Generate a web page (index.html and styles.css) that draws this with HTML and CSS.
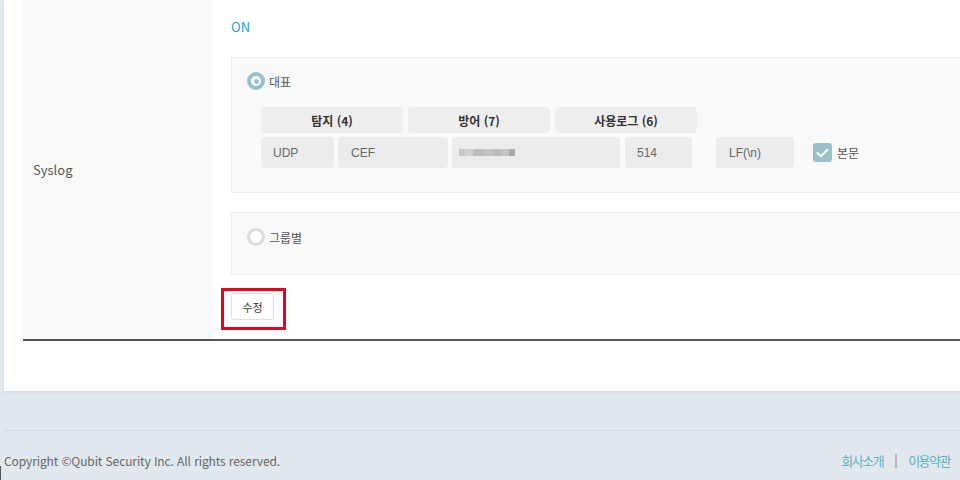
FILE: index.html
```html
<!DOCTYPE html>
<html lang="ko">
<head>
<meta charset="utf-8">
<link rel="stylesheet" href="styles.css">
</head>
<body>
<div class="panel">
  <div class="row">
    <div class="label">Syslog</div>
    <div class="content">
      <div class="on">ON</div>
      <div class="box box-main">
        <div class="radio-line"><span class="radio checked"></span><span class="radio-text">대표</span></div>
        <div class="grid">
          <div class="hdr-row">
            <div class="hdr">탐지 (4)</div>
            <div class="hdr">방어 (7)</div>
            <div class="hdr">사용로그 (6)</div>
          </div>
          <div class="val-row">
            <div class="cell w-udp">UDP</div>
            <div class="cell w-cef">CEF</div>
            <div class="cell w-ip"><span class="blur"><i class="b1"></i><i class="b2"></i><i class="b3"></i><i class="b4"></i><i class="b5"></i><i class="b6"></i><i class="b7"></i></span></div>
            <div class="cell w-port">514</div>
            <div class="cell w-lf">LF(\n)</div>
            <label class="check"><span class="checkbox"><svg width="13" height="10" viewBox="0 0 13 10"><path d="M1.5 5 L5 8.2 L11.5 1.8" fill="none" stroke="#fff" stroke-width="2" stroke-linecap="round" stroke-linejoin="round"/></svg></span><span class="check-text">본문</span></label>
          </div>
        </div>
      </div>
      <div class="box box-group">
        <div class="radio-line"><span class="radio"></span><span class="radio-text">그룹별</span></div>
      </div>
      <div class="mark"><button class="btn">수정</button></div>
    </div>
  </div>
</div>
<div class="footer">
  <div class="copy">Copyright ©Qubit Security Inc. All rights reserved.</div>
  <div class="links"><a>회사소개</a><span class="sep"></span><a>이용약관</a></div>
</div>
<div class="cursor"></div>
</body>
</html>
```
FILE: styles.css
```css
* { box-sizing: border-box; }
html, body { margin: 0; padding: 0; }
body {
  background: #e2e9ee;
  width: 960px;
  height: 480px;
  overflow: hidden;
  position: relative;
  font-family: "Noto Sans CJK KR", "Noto Sans", sans-serif;
  color: #555;
}
.panel {
  margin-left: 4px;
  background: #fff;
  height: 391px;
  padding-left: 19px;
  box-shadow: 0 1px 3px rgba(0,0,0,0.08);
}
.row {
  display: flex;
  height: 341px;
  border-bottom: 2px solid #555;
}
.label {
  width: 189px;
  background: #f9f9f9;
  display: flex;
  align-items: center;
  padding-left: 10px;
  font-size: 13px;
  color: #555;
}
.content {
  flex: 1;
  padding: 17px 0 0 19px;
}
.on {
  font-size: 13px;
  line-height: 20px;
  color: #1c9fd8;
  margin-bottom: 20px;
}
.box {
  background: #f9f9f9;
  border: 1px solid #ececec;
  border-right: none;
  padding-left: 15px;
}
.box-main { height: 136px; padding-top: 14px; }
.box-group { height: 63px; padding-top: 15px; margin-top: 19px; }
.radio-line {
  display: flex;
  align-items: center;
  height: 18px;
}
.radio {
  width: 18px;
  height: 18px;
  border-radius: 50%;
  border: 3px solid #d5dbde;
  background: #fff;
  position: relative;
  flex: none;
}
.radio.checked {
  border: 4px solid #97c1cc;
}
.radio.checked::after {
  content: "";
  position: absolute;
  left: 2.5px;
  top: 2.5px;
  width: 5px;
  height: 5px;
  border-radius: 50%;
  background: #97c1cc;
}
.radio-text {
  margin-left: 4px;
  font-size: 12px;
  color: #555;
}
.grid {
  margin: 17px 0 0 14px;
}
.hdr-row {
  display: flex;
  gap: 5px;
}
.hdr {
  width: 142px;
  height: 26px;
  background: #eeeeee;
  border-radius: 4px;
  display: flex;
  align-items: center;
  justify-content: center;
  font-size: 12px;
  font-weight: bold;
  color: #333;
}
.val-row {
  display: flex;
  align-items: center;
  margin-top: 4px;
  height: 31px;
}
.cell {
  height: 31px;
  background: #ececed;
  border-radius: 4px;
  display: flex;
  align-items: center;
  padding-left: 12px;
  font-family: "Liberation Sans", Arial, sans-serif;
  font-size: 12px;
  color: #666;
  flex: none;
}
.w-udp { width: 73px; }
.w-cef { width: 110px; margin-left: 4px; padding-left: 13px; }
.w-ip { width: 168px; margin-left: 4px; padding-left: 7px; }
.w-port { width: 67px; margin-left: 5px; }
.w-lf { width: 78px; margin-left: 24px; padding-left: 13px; }
.blur { display: flex; height: 7px; }
.blur i { display: block; width: 8px; height: 7px; }
.blur .b1 { background: #c8c6c4; width: 6px; }
.blur .b2 { background: #d2d0cf; }
.blur .b3 { background: #bdbdbd; width: 12px; }
.blur .b4 { background: #c7c3bf; }
.blur .b5 { background: #b7bcc1; }
.blur .b6 { background: #c6c6c6; }
.blur .b7 { background: #aaaaaa; width: 6px; }
.check {
  display: flex;
  align-items: center;
  margin-left: 19px;
}
.checkbox {
  width: 19px;
  height: 19px;
  border-radius: 3px;
  background: #97c2cc;
  display: flex;
  align-items: center;
  justify-content: center;
}
.check-text {
  margin-left: 5px;
  font-size: 12px;
  color: #555;
}
.mark {
  display: inline-flex;
  border: 3px solid #e8001c;
  padding: 2px 9px 7px 7px;
  margin: 13px 0 0 -10px;
}
.btn {
  width: 43px;
  height: 27px;
  background: #fff;
  border: 1px solid #dedede;
  border-radius: 3px;
  font-family: "Noto Sans CJK KR", sans-serif;
  font-size: 11px;
  color: #333;
  padding: 0;
}
.footer {
  margin: 39px 0 0 4px;
  border-top: 1px solid #d3dadf;
  height: 50px;
  display: flex;
  align-items: center;
  justify-content: space-between;
  padding: 10px 10px 0 0;
}
.copy {
  font-size: 12px;
  letter-spacing: -0.1px;
  color: #666;
}
.links {
  display: flex;
  align-items: center;
  font-size: 13px;
  letter-spacing: -1.5px;
  color: #5cb0c3;
}
.sep {
  display: block;
  width: 2px;
  height: 14px;
  background: #b5b9bc;
  margin: 0 11px 0 12px;
}
.cursor {
  position: absolute;
  left: 0;
  top: 466px;
  width: 1px;
  height: 14px;
  background: #555;
}
```
